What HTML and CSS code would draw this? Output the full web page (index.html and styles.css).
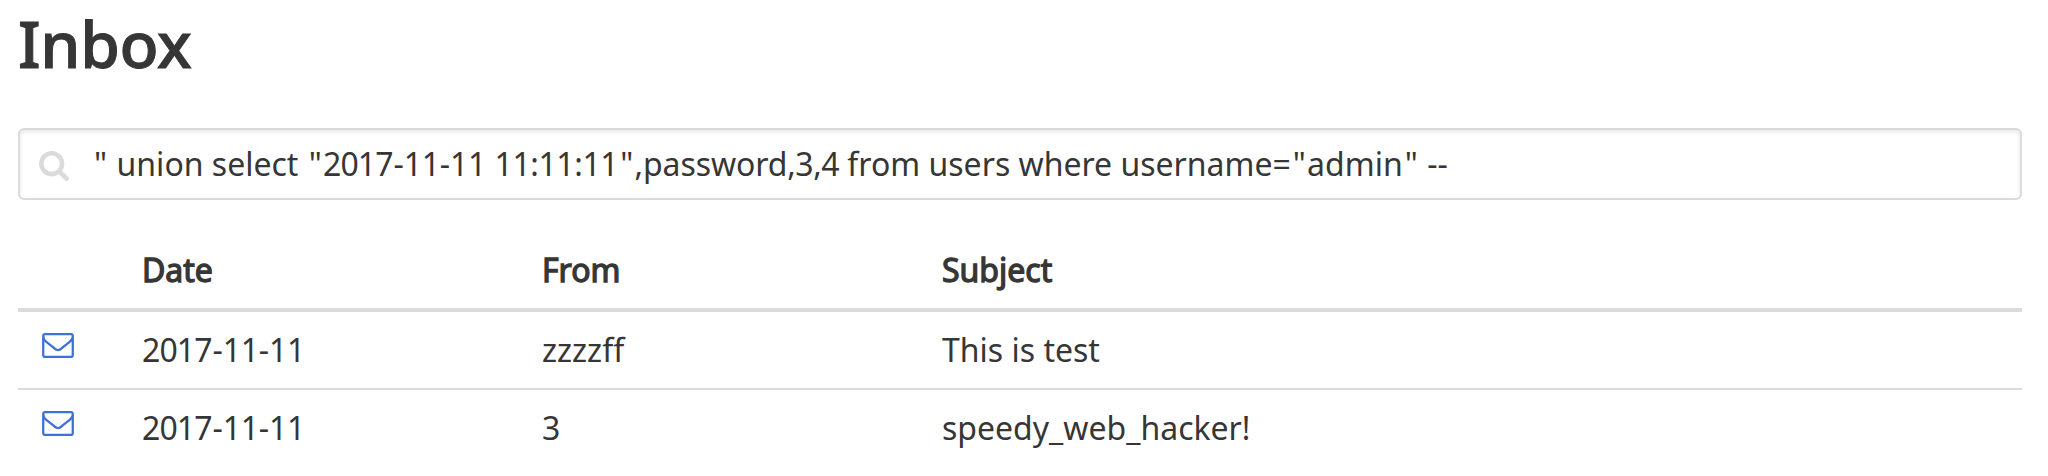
FILE: index.html
```html
<!DOCTYPE html>
<html lang="en">
<head>
<meta charset="utf-8">
<title>Inbox</title>
<link rel="stylesheet" href="styles.css">
</head>
<body>
<main class="page">
  <h1 class="title">Inbox</h1>
  <div class="search">
    <svg class="search-icon" viewBox="0 0 1664 1664"><path d="M1152 704q0-185-131.500-316.500T704 256 387.500 387.500 256 704t131.500 316.500T704 1152t316.500-131.500T1152 704zm512 832q0 52-38 90t-90 38q-54 0-90-38l-343-342q-179 124-399 124-143 0-273.500-55.500t-225-150-150-225T0 704t55.500-273.500 150-225 225-150T704 0t273.500 55.500 225 150 150 225T1408 704q0 220-124 399l343 343q37 37 37 90z"/></svg>
    <span class="query"><span class="quote">"</span> union select <span class="quote">"</span><span class="year">201</span>7<span class="days">-11-11</span> <span class="time">11:11:11</span><span class="quote">"</span><span class="word">,password</span><span class="nums">,3,4</span> from users where username=<span class="quote">"</span>admin<span class="quote">"</span> --</span>
  </div>
  <div class="table">
    <div class="row head"><span></span><span>Date</span><span>From</span><span>Subject</span></div>
    <div class="row"><svg class="mail" viewBox="0 0 1792 1408"><path d="M1664 1248V480q-32 36-69 66-268 206-426 338-51 43-83 67t-86.500 48.500T897 1024h-2q-48 0-102.500-24.500T706 951t-83-67Q465 752 197 546q-37-30-69-66v768q0 13 9.500 22.500t22.500 9.500h1472q13 0 22.500-9.500t9.500-22.500zm0-1051v-24.500l-.5-13-3-12.500-5.500-9-9-7.500-14-2.500H160q-13 0-22.500 9.500T128 160q0 168 147 284 193 152 401 317 6 5 35 29.500t46 37.500 44.500 31.500T852 887t43 9h2q20 0 43-9t50.500-27.500T1035 828t46-37.500 35-29.500q208-165 401-317 54-43 100.500-115.500T1664 197zm128-37v1088q0 66-47 113t-113 47H160q-66 0-113-47T0 1248V160Q0 94 47 47T160 0h1472q66 0 113 47t47 113z"/></svg><span><span class="year">201</span>7<span class="days">-11-11</span></span><span>zzzzff</span><span>This is test</span></div>
    <div class="row"><svg class="mail" viewBox="0 0 1792 1408"><path d="M1664 1248V480q-32 36-69 66-268 206-426 338-51 43-83 67t-86.500 48.500T897 1024h-2q-48 0-102.500-24.500T706 951t-83-67Q465 752 197 546q-37-30-69-66v768q0 13 9.500 22.500t22.500 9.500h1472q13 0 22.500-9.500t9.500-22.500zm0-1051v-24.500l-.5-13-3-12.500-5.500-9-9-7.500-14-2.500H160q-13 0-22.500 9.500T128 160q0 168 147 284 193 152 401 317 6 5 35 29.500t46 37.500 44.500 31.500T852 887t43 9h2q20 0 43-9t50.500-27.500T1035 828t46-37.500 35-29.500q208-165 401-317 54-43 100.500-115.500T1664 197zm128-37v1088q0 66-47 113t-113 47H160q-66 0-113-47T0 1248V160Q0 94 47 47T160 0h1472q66 0 113 47t47 113z"/></svg><span><span class="year">201</span>7<span class="days">-11-11</span></span><span>3</span><span>speedy_web_hacker!</span></div>
  </div>
</main>
</body>
</html>
```
FILE: styles.css
```css
body { margin: 0; background: #fff; color: #363636; font-family: "Noto Sans", sans-serif; font-size: 32px; line-height: 43px; overflow: hidden; }
.page { padding: 8px 26px 0 18px; }
.title { margin: 0 0 48px; font-size: 64px; line-height: 72px; font-weight: 500; letter-spacing: -0.3px; -webkit-text-stroke: 1px #363636; }
.search { box-sizing: border-box; height: 72px; border: 2px solid #dbdbdb; border-radius: 6px; box-shadow: inset 0 2px 4px rgba(10,10,10,.1); display: flex; align-items: flex-start; padding: 12px 0 0 19px; gap: 23px; white-space: pre; }
.search-icon { width: 30px; height: 30px; margin-top: 9px; fill: #dbdbdb; }
.quote { padding: 0 1.2px 0 2px; }
.year { letter-spacing: -0.9px; }
.days { letter-spacing: -0.2px; }
.time { letter-spacing: -0.4px; }
.word { letter-spacing: -0.1px; }
.nums { letter-spacing: -0.5px; }
.table { margin-top: 32px; }
.row { display: grid; grid-template-columns: 124px 400px 400px 1fr; align-items: start; box-sizing: border-box; height: 78px; padding-top: 16px; border-bottom: 2px solid #dbdbdb; }
.row:last-child { border-bottom: 0; }
.head { height: 80px; border-bottom-width: 4px; -webkit-text-stroke: 1.3px #363636; }
.mail { width: 32px; height: 25px; margin: 5px 0 0 24px; fill: #3d71d9; }
```
